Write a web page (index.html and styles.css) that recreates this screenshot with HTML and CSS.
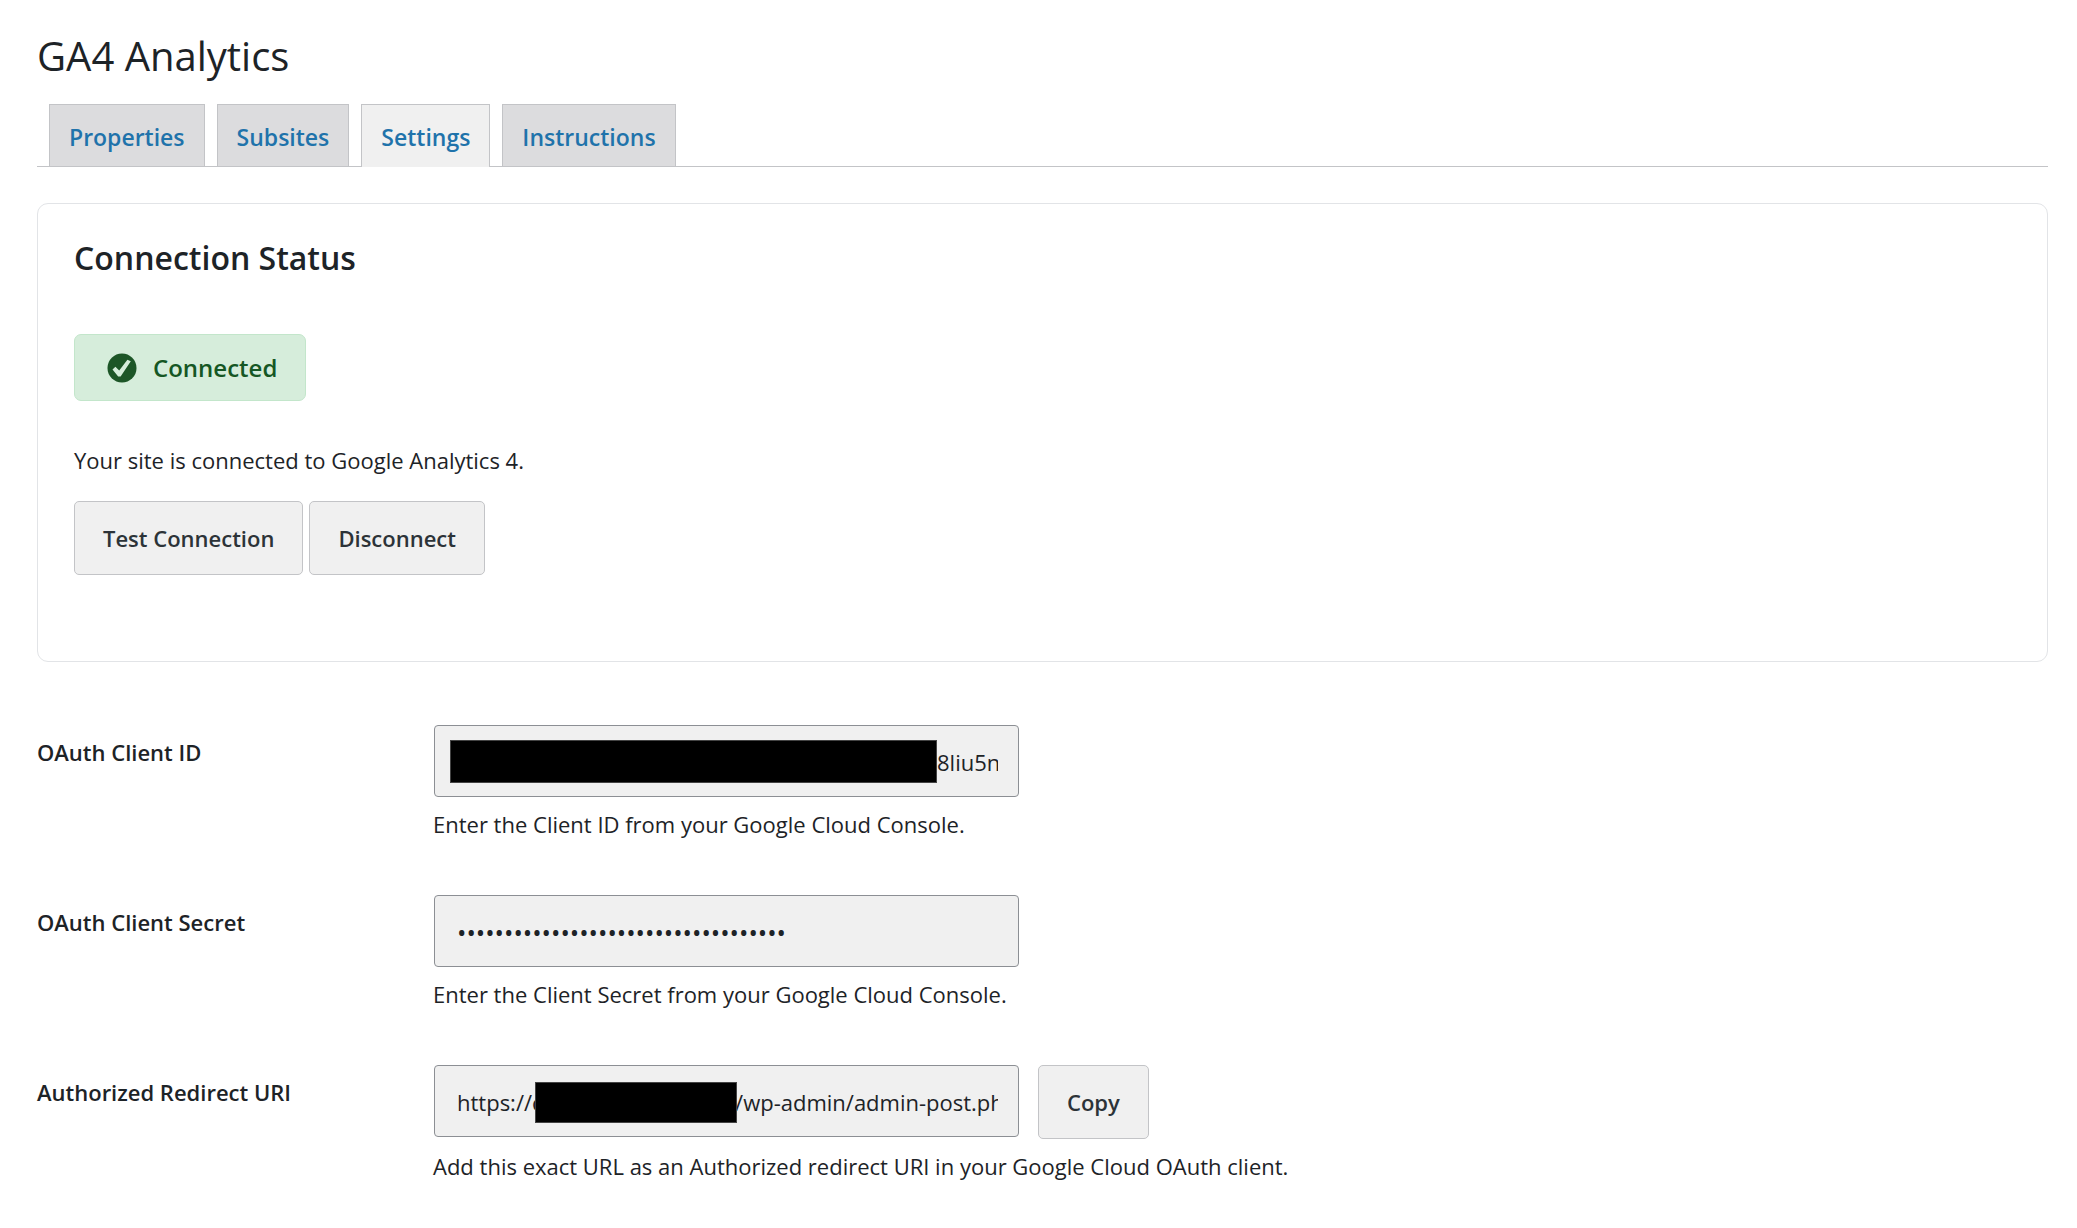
FILE: index.html
```html
<!DOCTYPE html>
<html lang="en">
<head>
    <meta charset="UTF-8">
    <meta name="viewport" content="width=device-width, initial-scale=1.0">
    <title>GA4 Analytics</title>
    <link rel="stylesheet" href="styles.css">
</head>
<body>
    <div class="wrap">
        <h1>GA4 Analytics</h1>

        <nav class="nav-tabs">
            <a href="#properties" class="nav-tab">Properties</a>
            <a href="#subsites" class="nav-tab">Subsites</a>
            <a href="#settings" class="nav-tab nav-tab-active">Settings</a>
            <a href="#instructions" class="nav-tab">Instructions</a>
        </nav>

        <section class="card">
            <h2>Connection Status</h2>
            <div class="status">
                <svg class="status-icon" viewBox="0 0 30 30" aria-hidden="true">
                    <circle cx="15" cy="15" r="14.5" fill="#1d5627"/>
                    <path d="M5.5 16.6 L8.4 13.8 L12.2 17.4 L20.4 6.8 L23.8 8.2 L13.6 23.4 L11.2 23.4 Z" fill="#d6eddb"/>
                </svg>
                <span>Connected</span>
            </div>
            <p>Your site is connected to Google Analytics 4.</p>
            <div class="actions">
                <button type="button" class="button">Test Connection</button>
                <button type="button" class="button">Disconnect</button>
            </div>
        </section>

        <form class="settings-form">
            <div class="form-row">
                <label for="client-id">OAuth Client ID</label>
                <div class="field">
                    <div class="control">
                        <div class="input-box">
                            <input type="text" id="client-id" class="masked-start" value="8liu5n" readonly>
                            <span class="mask mask-id"></span>
                        </div>
                    </div>
                    <p class="description">Enter the Client ID from your Google Cloud Console.</p>
                </div>
            </div>

            <div class="form-row">
                <label for="client-secret">OAuth Client Secret</label>
                <div class="field">
                    <div class="control">
                        <div class="input-box">
                            <input type="password" id="client-secret" value="00000000000000000000000000000000000" readonly>
                        </div>
                    </div>
                    <p class="description">Enter the Client Secret from your Google Cloud Console.</p>
                </div>
            </div>

            <div class="form-row">
                <label for="redirect-uri">Authorized Redirect URI</label>
                <div class="field">
                    <div class="control">
                        <div class="input-box">
                            <input type="text" id="redirect-uri" value="https://c&emsp;&emsp;&emsp;&emsp;&emsp;&emsp;&emsp;&emsp;&ensp;&emsp14;/wp-admin/admin-post.php" readonly>
                            <span class="mask mask-host"></span>
                        </div>
                        <button type="button" class="button">Copy</button>
                    </div>
                    <p class="description">Add this exact URL as an Authorized redirect URI in your Google Cloud OAuth client.</p>
                </div>
            </div>
        </form>
    </div>
</body>
</html>
```
FILE: styles.css
```css
* {
    box-sizing: border-box;
}

body {
    margin: 0;
    background-color: #fff;
    color: #1d2327;
    font-family: "Segoe UI", "Open Sans", sans-serif;
    font-size: 22px;
    line-height: 32px;
}

.wrap {
    padding: 31px 29px 32px 37px;
}

h1 {
    margin: 0;
    font-size: 40px;
    font-weight: 400;
    line-height: 50px;
}

h2 {
    margin: 0;
    font-size: 32px;
    font-weight: 600;
    line-height: 40px;
}

.nav-tabs {
    display: flex;
    gap: 12px;
    margin-top: 23px;
    padding-left: 12px;
    border-bottom: 1px solid #c3c4c7;
}

.nav-tab {
    padding: 14px 19px 10px;
    border: 1px solid #c3c4c7;
    border-bottom: none;
    background-color: #dcdcde;
    color: #1f73ab;
    font-size: 23px;
    font-weight: 600;
    line-height: 37px;
    text-decoration: none;
}

.nav-tab-active {
    margin-bottom: -1px;
    background-color: #f0f0f0;
}

.card {
    margin-top: 36px;
    padding: 34px 36px 86px;
    border: 1px solid #e2e4e7;
    border-radius: 11px;
}

.status {
    display: inline-flex;
    align-items: center;
    gap: 16px;
    margin-top: 56px;
    padding: 16px 28px 16px 32px;
    border: 1px solid #c3e6cb;
    border-radius: 7px;
    background-color: #d6eddb;
    color: #155724;
    font-size: 24px;
    font-weight: 600;
    line-height: 33px;
}

.status-icon {
    width: 30px;
    height: 30px;
}

.card p {
    margin: 43px 0 0;
}

.actions {
    display: flex;
    gap: 6px;
    margin-top: 25px;
}

.button {
    height: 74px;
    padding: 0 28px;
    border: 1px solid #c3c4c7;
    border-radius: 5px;
    background-color: #f0f0f0;
    color: #2c3338;
    font-family: inherit;
    font-size: 22px;
    font-weight: 600;
}

.settings-form {
    margin-top: 63px;
}

.form-row {
    display: grid;
    grid-template-columns: 396px 1fr;
    margin-bottom: 55px;
}

.form-row label {
    padding-top: 11px;
    font-weight: 600;
}

.control {
    display: flex;
    gap: 19px;
    padding-left: 1px;
}

.input-box {
    position: relative;
    width: 585px;
}

.input-box input {
    display: block;
    width: 100%;
    height: 72px;
    padding: 2px 20px 0 22px;
    border: 1px solid #8c8f94;
    border-radius: 4px;
    background-color: #f0f0f0;
    color: #1d2327;
    font-family: inherit;
    font-size: 22px;
}

.input-box input[type="password"] {
    font-size: 25px;
}

.input-box .masked-start {
    padding-left: 502px;
}

/* covers the private part of a value */
.mask {
    position: absolute;
    border: 1px solid #444;
    background-color: #000;
}

.mask-id {
    top: 15px;
    left: 16px;
    width: 487px;
    height: 43px;
}

.mask-host {
    top: 17px;
    left: 101px;
    width: 202px;
    height: 41px;
}

.description {
    margin: 11px 0 0;
}
```
